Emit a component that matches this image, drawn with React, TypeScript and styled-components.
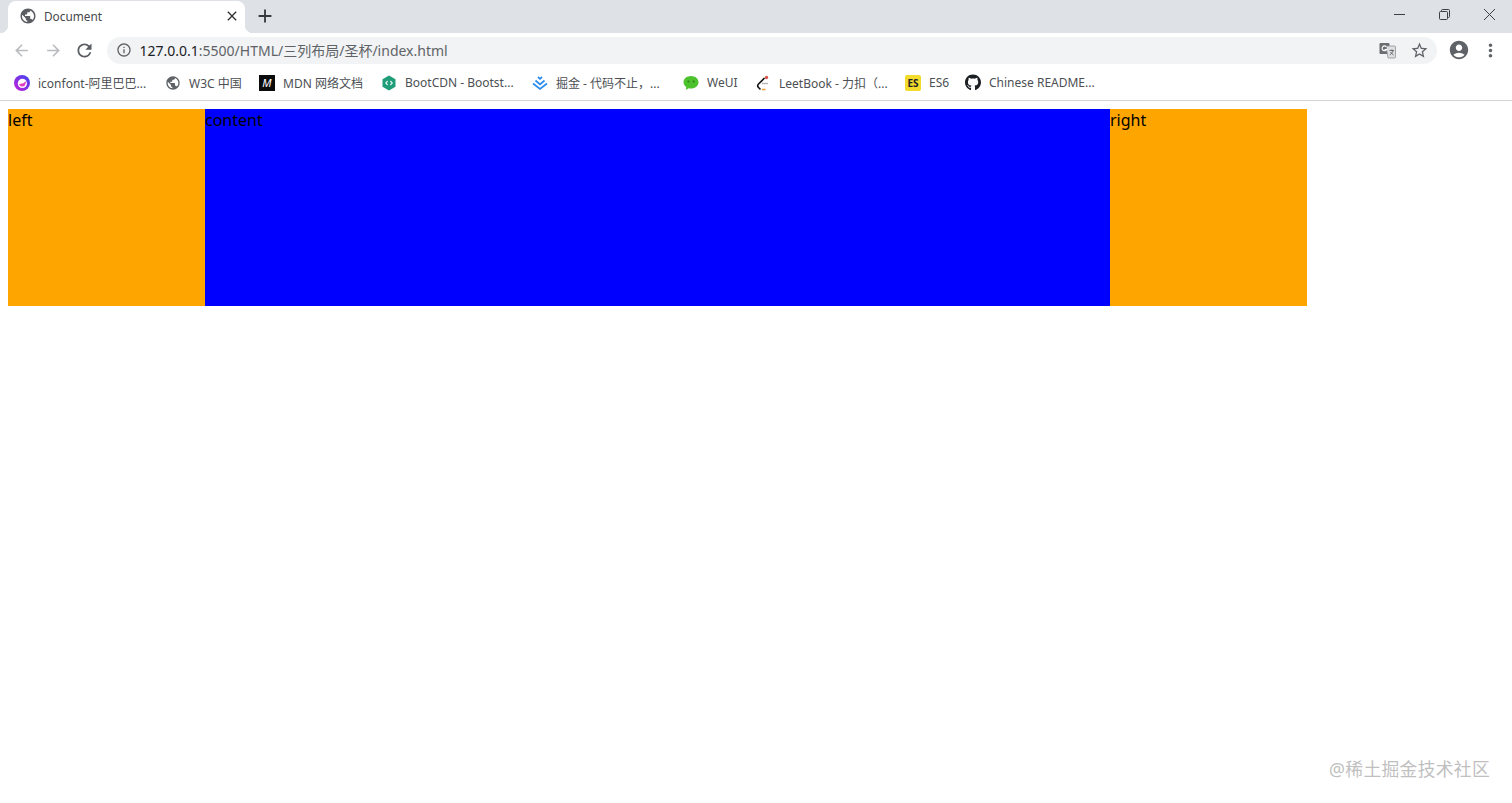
import React from 'react'
import styled, { createGlobalStyle } from 'styled-components'
import { MdPublic, MdClose, MdAdd, MdArrowBack, MdArrowForward, MdRefresh, MdInfoOutline, MdStarBorder, MdAccountCircle, MdMoreVert } from 'react-icons/md'
import { FaGithub } from 'react-icons/fa'

const UI_FONT = `"Noto Sans", "Open Sans", "Noto Sans CJK SC", sans-serif`

const GlobalStyle = createGlobalStyle`
  html, body {
    margin: 0;
    padding: 0;
    height: 100%;
    background: #fff;
    overflow: hidden;
  }
  body {
    font-family: ${UI_FONT};
  }
`

const Shell = styled.div`
  position: relative;
  width: 1512px;
  height: 803px;
  display: flex;
  flex-direction: column;
`

const TabStrip = styled.div`
  display: flex;
  align-items: flex-end;
  height: 33px;
  background: #dee1e6;
  padding-left: 8px;
`

const Tab = styled.div`
  position: relative;
  display: flex;
  align-items: center;
  width: 237px;
  height: 32px;
  box-sizing: border-box;
  padding: 0 5px 2px 11px;
  background: #fff;
  border-radius: 8px 8px 0 0;
  color: #45484c;
  font-size: 11.8px;
  &::before,
  &::after {
    content: '';
    position: absolute;
    bottom: 0;
    width: 8px;
    height: 8px;
    background: radial-gradient(circle at ${'var(--cx)'} 0, #dee1e6 8px, #fff 8.5px);
  }
  &::before {
    --cx: 0;
    left: -8px;
  }
  &::after {
    --cx: 100%;
    right: -8px;
  }
`

const TabTitle = styled.span`
  flex: 1;
  margin-left: 7px;
`

const NewTab = styled.div`
  display: flex;
  margin: 0 0 6px 9px;
  color: #36393d;
`

const WindowControls = styled.div`
  display: flex;
  margin-left: auto;
  align-self: flex-start;
`

const WindowButton = styled.div`
  display: flex;
  align-items: center;
  justify-content: center;
  width: 45px;
  height: 29px;
  color: #3c3f43;
`

const Toolbar = styled.div`
  display: flex;
  align-items: center;
  height: 34px;
  padding-left: 6px;
  background: #fff;
`

const NavButton = styled.div<{ $off?: boolean }>`
  display: flex;
  align-items: center;
  justify-content: center;
  width: 31.5px;
  color: ${(p) => (p.$off ? '#b9bbbe' : '#5a5d61')};
`

const AddressBar = styled.div`
  display: flex;
  align-items: center;
  width: 1330px;
  height: 27px;
  margin-left: 6px;
  padding: 0 8px 0 9px;
  box-sizing: border-box;
  background: #f1f3f4;
  border-radius: 14px;
`

const Url = styled.div`
  flex: 1;
  margin-left: 8px;
  font-size: 14px;
  color: #5f6368;
  white-space: nowrap;
`

const Host = styled.span`
  color: #202124;
`

const BarIcon = styled.div<{ $gap?: number }>`
  display: flex;
  margin-left: ${(p) => p.$gap ?? 0}px;
  color: #5f6368;
`

const ToolbarEnd = styled.div`
  display: flex;
  align-items: center;
  margin-left: 11px;
  gap: 10px;
  color: #5f6368;
`

const Bookmarks = styled.div`
  display: flex;
  align-items: center;
  height: 33px;
  box-sizing: content-box;
  padding-left: 14px;
  background: #fff;
  border-bottom: 1px solid #d2d3d5;
`

const Bookmark = styled.div<{ $width: number }>`
  display: flex;
  align-items: center;
  gap: 8px;
  width: ${(p) => p.$width}px;
  height: 31px;
  margin-bottom: 2px;
  flex: none;
  font-size: 12px;
  color: #4c4f53;
  white-space: nowrap;
`

const Favicon = styled.div`
  display: flex;
  align-items: center;
  justify-content: center;
  width: 16px;
  height: 16px;
  flex: none;
`

const MdnMark = styled(Favicon)`
  background: #0b0b0b;
  color: #fff;
  font-size: 11px;
  font-style: italic;
  font-weight: 400;
`

const EsMark = styled(Favicon)`
  background: #f3db2e;
  border-radius: 2px;
  color: #222;
  font-size: 10px;
  font-weight: 700;
`

const Page = styled.div`
  padding: 8px;
  flex: 1;
`

const Holy = styled.div`
  display: flex;
  width: 1299px;
  height: 197px;
  color: #000;
  font-size: 16px;
  line-height: 22px;
`

const Side = styled.div`
  width: 197px;
  flex: none;
  background: #ffa500;
`

const Center = styled.div`
  flex: 1;
  background: #0000ff;
`

const Watermark = styled.div`
  position: absolute;
  right: 22px;
  bottom: 22px;
  font-size: 17.8px;
  line-height: 24px;
  letter-spacing: 0.3px;
  color: #bfbfbf;
  font-family: "Noto Sans", "Noto Sans CJK SC", sans-serif;
`

const IconfontLogo = () => (
  <svg width="16" height="16" viewBox="0 0 16 16">
    <defs>
      <linearGradient id="ifg" x1="0" y1="1" x2="1" y2="0">
        <stop offset="0" stopColor="#c81fd8" />
        <stop offset="1" stopColor="#3a46f0" />
      </linearGradient>
    </defs>
    <circle cx="8" cy="8" r="8" fill="url(#ifg)" />
    <circle cx="8.4" cy="8.4" r="4.6" fill="#fff" />
    <path d="M5 9a3.400 3.400 0 0 0 5.800 1.400L12.500 6 8.800 8.600z" fill="#e23bc2" />
  </svg>
)

const BootLogo = () => (
  <svg width="16" height="16" viewBox="0 0 16 16">
    <path d="M8 .5 14.500 4.200v7.600L8 15.500 1.500 11.800V4.200z" fill="#1f9d78" />
    <path d="M6.600 6 4.800 8l1.800 2M9.400 6l1.800 2-1.800 2" fill="none" stroke="#dff5ec" strokeWidth="1.200" />
  </svg>
)

const JuejinLogo = () => (
  <svg width="16" height="16" viewBox="0 0 16 16" fill="none" stroke="#2a8cf0" strokeWidth="1.700">
    <path d="M6 2 8 3.800 10 2" />
    <path d="M3.500 5.500 8 9.300 12.500 5.500" />
    <path d="M1 8.500 8 14 15 8.500" />
  </svg>
)

const LeetLogo = () => (
  <svg width="16" height="16" viewBox="0 0 16 16" fill="none">
    <path d="M9.500 3 3.500 9a2.500 2.500 0 0 0 0 3.500L5.500 14.500" stroke="#111" strokeWidth="1.600" />
    <path d="M7 14.500h3.500" stroke="#e8a33c" strokeWidth="1.600" />
    <path d="M7 8.500h6" stroke="#b8b8b8" strokeWidth="1.400" />
    <circle cx="11.500" cy="2.500" r="1.700" fill="#d8534a" />
  </svg>
)

const WeuiLogo = () => (
  <svg width="16" height="16" viewBox="0 0 16 16">
    <path d="M8 1c4.300 0 7.500 2.800 7.500 6.300S12.300 13.600 8 13.600c-.9 0-1.700-.1-2.500-.3L3 15l.2-3C1.500 10.800.5 9.200.5 7.300.5 3.800 3.700 1 8 1z" fill="#4cc22d" />
    <circle cx="5.400" cy="6.500" r="1.100" fill="#2f7d1b" />
    <circle cx="10.600" cy="6.500" r="1.100" fill="#2f7d1b" />
  </svg>
)

const TranslateIcon = () => (
  <svg width="17" height="17" viewBox="0 0 17 17">
    <rect x="0.500" y="1" width="10" height="11" rx="1" fill="#6a6d71" />
    <path d="M7 4h8.500a1 1 0 0 1 1 1v10a1 1 0 0 1-1 1H9z" fill="#dcdee0" stroke="#85888c" strokeWidth="0.700" />
    <path d="M7.200 4.600a2.400 2.400 0 1 0 .4 2.900H5.500" fill="none" stroke="#fff" strokeWidth="1.100" />
    <path d="M10.500 8.500h4.500M12.800 7.500v1M14 8.500c-.5 2-1.800 3.600-3.300 4.400M11.500 10c.6 1.100 1.700 2.200 3 2.900" fill="none" stroke="#5f6368" strokeWidth="0.900" />
  </svg>
)

const MinimizeIcon = () => (
  <svg width="11" height="11" viewBox="0 0 11 11">
    <path d="M0 5.500h11" stroke="currentColor" />
  </svg>
)

const RestoreIcon = () => (
  <svg width="11" height="11" viewBox="0 0 11 11" fill="none" stroke="currentColor">
    <rect x="0.500" y="2.500" width="8" height="8" rx="1" />
    <path d="M2.500 2.500v-1a1 1 0 0 1 1-1h6a1 1 0 0 1 1 1v6a1 1 0 0 1-1 1h-1" />
  </svg>
)

const CloseIcon = () => (
  <svg width="11" height="11" viewBox="0 0 11 11">
    <path d="M0 0l11 11M11 0 0 11" stroke="currentColor" />
  </svg>
)

const bookmarks = [
  { width: 151, label: 'iconfont-阿里巴巴...', icon: <IconfontLogo /> },
  { width: 94, label: 'W3C 中国', icon: <MdPublic size={18} color="#5f6368" /> },
  { width: 122, label: 'MDN 网络文档', icon: <MdnMark>M</MdnMark> },
  { width: 151, label: 'BootCDN - Bootst...', icon: <BootLogo /> },
  { width: 151, label: '掘金 - 代码不止，...', icon: <JuejinLogo /> },
  { width: 72, label: 'WeUI', icon: <WeuiLogo /> },
  { width: 150, label: 'LeetBook - 力扣（...', icon: <LeetLogo /> },
  { width: 60, label: 'ES6', icon: <EsMark>ES</EsMark> },
  { width: 140, label: 'Chinese README...', icon: <FaGithub size={17} color="#1b1f23" /> },
]

const App = () => {
  return (
    <Shell>
      <GlobalStyle />
      <TabStrip>
        <Tab>
          <MdPublic size={18} color="#5a5d61" />
          <TabTitle>Document</TabTitle>
          <MdClose size={16} color="#303336" />
        </Tab>
        <NewTab>
          <MdAdd size={22} />
        </NewTab>
        <WindowControls>
          <WindowButton><MinimizeIcon /></WindowButton>
          <WindowButton><RestoreIcon /></WindowButton>
          <WindowButton><CloseIcon /></WindowButton>
        </WindowControls>
      </TabStrip>
      <Toolbar>
        <NavButton $off><MdArrowBack size={19} /></NavButton>
        <NavButton $off><MdArrowForward size={19} /></NavButton>
        <NavButton><MdRefresh size={21} /></NavButton>
        <AddressBar>
          <MdInfoOutline size={16} color="#5f6368" />
          <Url><Host>127.0.0.1</Host>:5500/HTML/三列布局/圣杯/index.html</Url>
          <BarIcon><TranslateIcon /></BarIcon>
          <BarIcon $gap={14}><MdStarBorder size={19} /></BarIcon>
        </AddressBar>
        <ToolbarEnd>
          <MdAccountCircle size={22} />
          <MdMoreVert size={21} />
        </ToolbarEnd>
      </Toolbar>
      <Bookmarks>
        {bookmarks.map((b) => (
          <Bookmark key={b.label} $width={b.width}>
            <Favicon>{b.icon}</Favicon>
            {b.label}
          </Bookmark>
        ))}
      </Bookmarks>
      <Page>
        <Holy>
          <Side>left</Side>
          <Center>content</Center>
          <Side>right</Side>
        </Holy>
      </Page>
      <Watermark>@稀土掘金技术社区</Watermark>
    </Shell>
  )
}

export default App
